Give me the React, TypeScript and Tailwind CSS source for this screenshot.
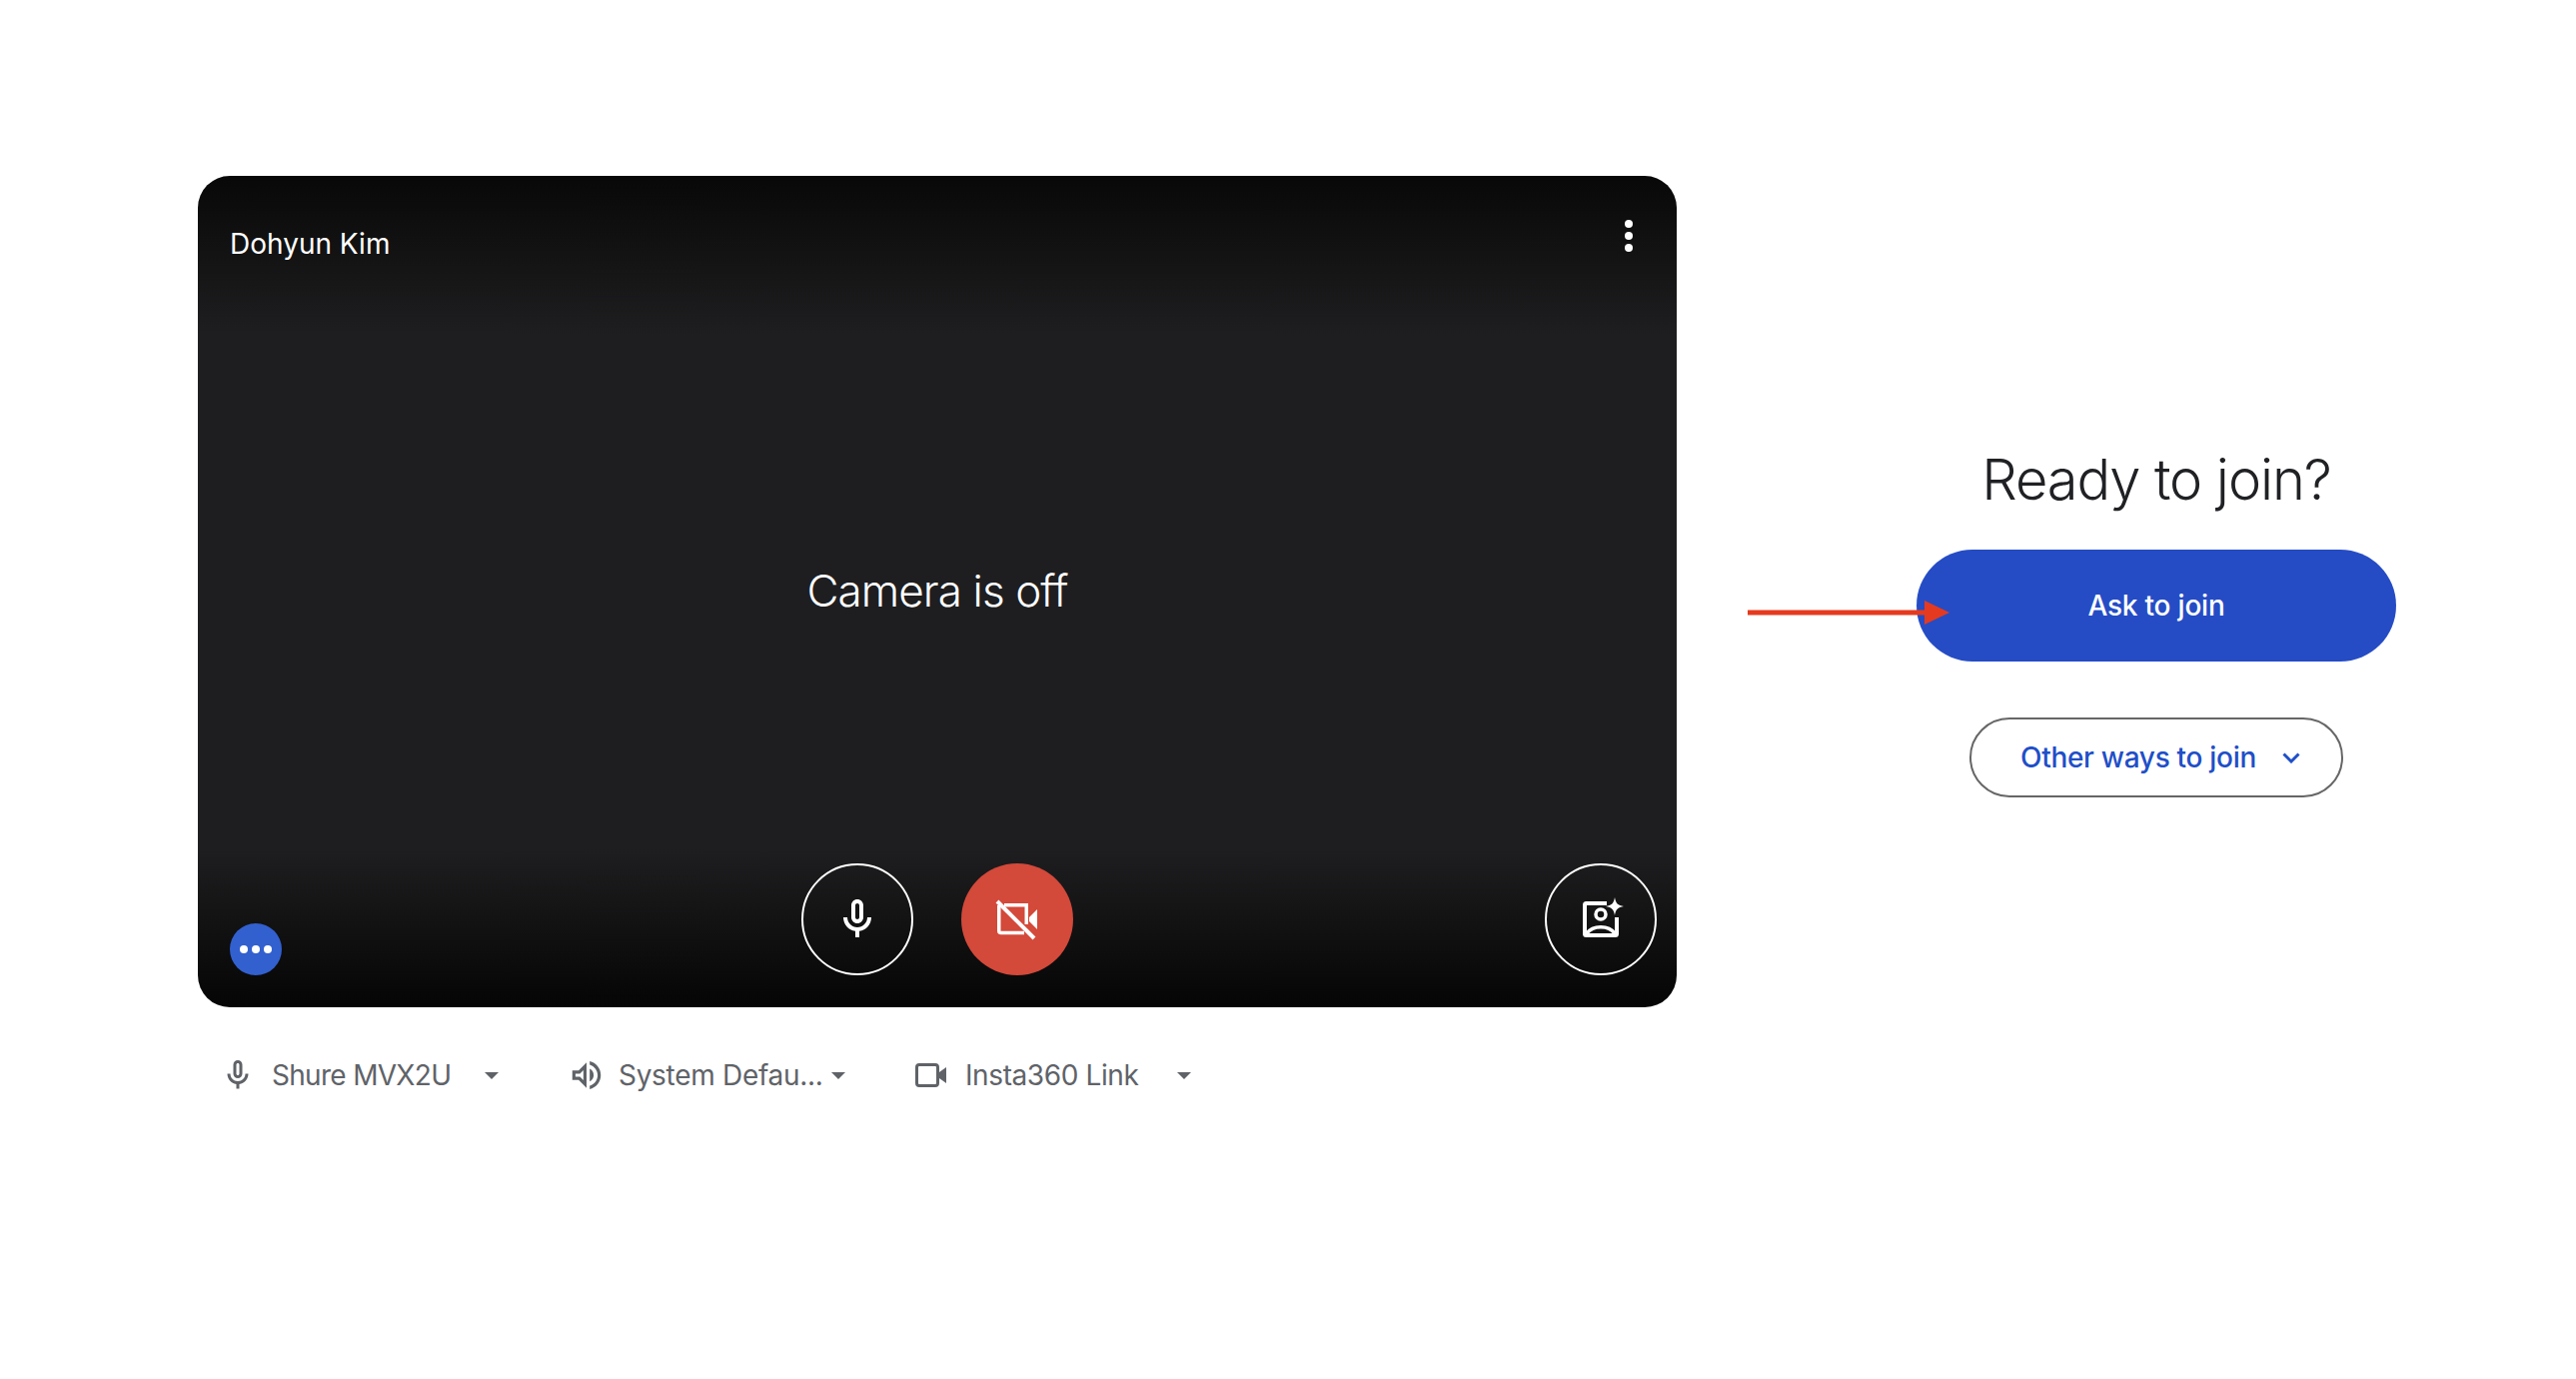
const font = "font-['Inter',sans-serif]";

const Caret = () => (
  <svg width="14" height="7" viewBox="0 0 14 7" className="shrink-0 ml-auto">
    <path d="M0 0h14L7 7z" fill="#5f6368" />
  </svg>
);

const DeviceSelect = ({
  icon,
  label,
  className,
  iconClass,
  textClass,
}: {
  icon: React.ReactNode;
  label: string;
  className: string;
  iconClass: string;
  textClass: string;
}) => (
  <div className={`flex items-center h-[40px] ${className}`}>
    <div className={`shrink-0 flex items-center ${iconClass}`}>{icon}</div>
    <span className={`text-[28px] leading-[40px] text-[#5f6368] whitespace-nowrap ${textClass}`}>
      {label}
    </span>
    <Caret />
  </div>
);

const MicIcon = ({ size, color }: { size: number; color: string }) => (
  <svg width={size} height={size} viewBox="0 0 24 24" fill={color}>
    <path d="M12 14c1.66 0 3-1.34 3-3V5c0-1.66-1.34-3-3-3S9 3.34 9 5v6c0 1.66 1.34 3 3 3zm-1-9c0-.55.45-1 1-1s1 .45 1 1v6c0 .55-.45 1-1 1s-1-.45-1-1V5z" />
    <path d="M17 11c0 2.76-2.24 5-5 5s-5-2.24-5-5H5c0 3.53 2.61 6.43 6 6.92V21h2v-3.08c3.39-.49 6-3.39 6-6.92h-2z" />
  </svg>
);

export default function App() {
  return (
    <div className={`w-[2578px] h-[1380px] bg-white overflow-hidden pt-[176px] pl-[198px] flex ${font}`}>
      {/* 왼쪽 - 프리뷰 */}
      <div className="w-[1480px] shrink-0 flex flex-col">
        <div className="h-[832px] rounded-[32px] overflow-hidden flex flex-col bg-[linear-gradient(180deg,#080808_0%,#1e1e20_19%,#1e1e20_81%,#050505_100%)]">
          <div className="flex justify-between pl-[32px] pr-[42px] pt-[50px]">
            <span className="text-[28px] leading-[36px] text-white">Dohyun Kim</span>
            <svg width="12" height="32" viewBox="0 0 12 32" className="-mt-[6px]" fill="#fff">
              <circle cx="6" cy="4" r="4" />
              <circle cx="6" cy="16" r="4" />
              <circle cx="6" cy="28" r="4" />
            </svg>
          </div>
          <div className="flex-1 flex items-center justify-center pt-[56px]">
            <span className="text-[44px] leading-[52px] font-[350] tracking-[-0.9px] text-white">Camera is off</span>
          </div>
          <div className="grid grid-cols-[572px_auto_1fr] items-end pl-[32px] pr-[20px] pb-[32px]">
            <div className="w-[52px] h-[52px] rounded-full bg-[#3260cf] flex items-center justify-center gap-[4px]">
              <span className="w-[8px] h-[8px] rounded-full bg-white" />
              <span className="w-[8px] h-[8px] rounded-full bg-white" />
              <span className="w-[8px] h-[8px] rounded-full bg-white" />
            </div>
            <div className="flex gap-[48px]">
              <button className="w-[112px] h-[112px] rounded-full border-2 border-white flex items-center justify-center">
                <MicIcon size={48} color="#fff" />
              </button>
              <button className="w-[112px] h-[112px] rounded-full bg-[#d3493a] flex items-center justify-center">
                <svg width="48" height="48" viewBox="0 0 48 48" fill="none" stroke="#fff">
                  <path d="M11 9.750H33.250V29" strokeWidth="3.500" />
                  <path d="M5.750 10V35.500A2 2 0 0 0 7.750 37.500H31" strokeWidth="3.500" />
                  <path d="M4 6L41 43" strokeWidth="4" />
                  <path d="M36 22L44 14V34L36 26z" fill="#fff" stroke="none" />
                </svg>
              </button>
            </div>
            <button className="justify-self-end w-[112px] h-[112px] rounded-full border-2 border-white flex items-center justify-center">
              <svg width="48" height="48" viewBox="0 0 48 48" fill="none">
                <path d="M30 8H9.5A1.5 1.5 0 0 0 8 9.500V38.500A1.500 1.500 0 0 0 9.500 40H38.500A1.500 1.500 0 0 0 40 38.500V22" stroke="#fff" strokeWidth="4" />
                <circle cx="24" cy="19" r="5" stroke="#fff" strokeWidth="3.500" />
                <path d="M10 38C16 29.500 32 29.500 38 38" stroke="#fff" strokeWidth="3.500" />
                <path d="M38 2C39 8 41 10 47 11C41 12 39 14 38 20C37 14 35 12 29 11C35 10 37 8 38 2z" fill="#fff" />
              </svg>
            </button>
          </div>
        </div>
        {/* 장치 선택 */}
        <div className="flex pl-[29px] mt-[48px]">
          <DeviceSelect
            className="w-[272px]"
            iconClass="w-[45px]"
            textClass="tracking-[-0.7px]"
            label="Shure MVX2U"
            icon={<div className="-ml-[7px]"><MicIcon size={36} color="#5f6368" /></div>}
          />
          <DeviceSelect
            className="w-[273px] ml-[74px]"
            iconClass="w-[46px]"
            textClass="tracking-[-0.3px]"
            label="System Defau..."
            icon={
              <svg width="38" height="38" viewBox="0 0 24 24" fill="#5f6368" className="-ml-[5px]">
                <path d="M3 9v6h4l5 5V4L7 9H3zm7-.17v6.34L7.83 13H5v-2h2.83L10 8.83zM16.500 12c0-1.770-1.020-3.290-2.500-4.030v8.050c1.480-.730 2.500-2.250 2.500-4.020zM14 3.230v2.060c2.890.860 5 3.540 5 6.710s-2.110 5.850-5 6.710v2.060c4.010-.910 7-4.490 7-8.770 0-4.280-2.990-7.860-7-8.770z" />
              </svg>
            }
          />
          <DeviceSelect
            className="w-[276px] ml-[70px]"
            iconClass="w-[50px]"
            textClass="tracking-[-0.4px]"
            label="Insta360 Link"
            icon={
              <svg width="31" height="24" viewBox="0 0 31 24" fill="none">
                <rect x="1.500" y="1.500" width="21" height="21" rx="2.500" stroke="#5f6368" strokeWidth="3" />
                <path d="M24 9l7-5v16l-7-5z" fill="#5f6368" />
              </svg>
            }
          />
        </div>
      </div>

      {/* 오른쪽 - 참여 */}
      <div className="relative ml-[240px] w-[480px] shrink-0 flex flex-col items-center pt-[268px]">
        <h1 className="text-[56px] leading-[72px] font-[350] tracking-[-1.1px] text-[#202124] whitespace-nowrap">Ready to join?</h1>
        <button className="relative mt-[34px] w-[480px] h-[112px] rounded-full bg-[#254cc5] text-white text-[28px] font-medium tracking-[-0.2px]">
          Ask to join
          {/* 빨간 화살표 */}
          <svg width="202" height="24" viewBox="0 0 202 24" className="absolute left-[-169px] top-[51px]" fill="#e53a1f">
            <rect x="0" y="9.500" width="178" height="5" />
            <path d="M177 0l25 12-25 12z" />
          </svg>
        </button>
        <button className="mt-[56px] w-[374px] h-[80px] rounded-full border-2 border-[#666666] flex items-center pl-[49px] text-[#1f4fc8] text-[28px] font-medium tracking-[-0.3px] whitespace-nowrap">
          Other ways to join
          <svg width="18" height="11" viewBox="0 0 18 11" fill="none" className="ml-auto mr-[41px]">
            <path d="M1.500 1.500L9 9l7.500-7.500" stroke="#1f4fc8" strokeWidth="3" />
          </svg>
        </button>
      </div>
    </div>
  );
}
